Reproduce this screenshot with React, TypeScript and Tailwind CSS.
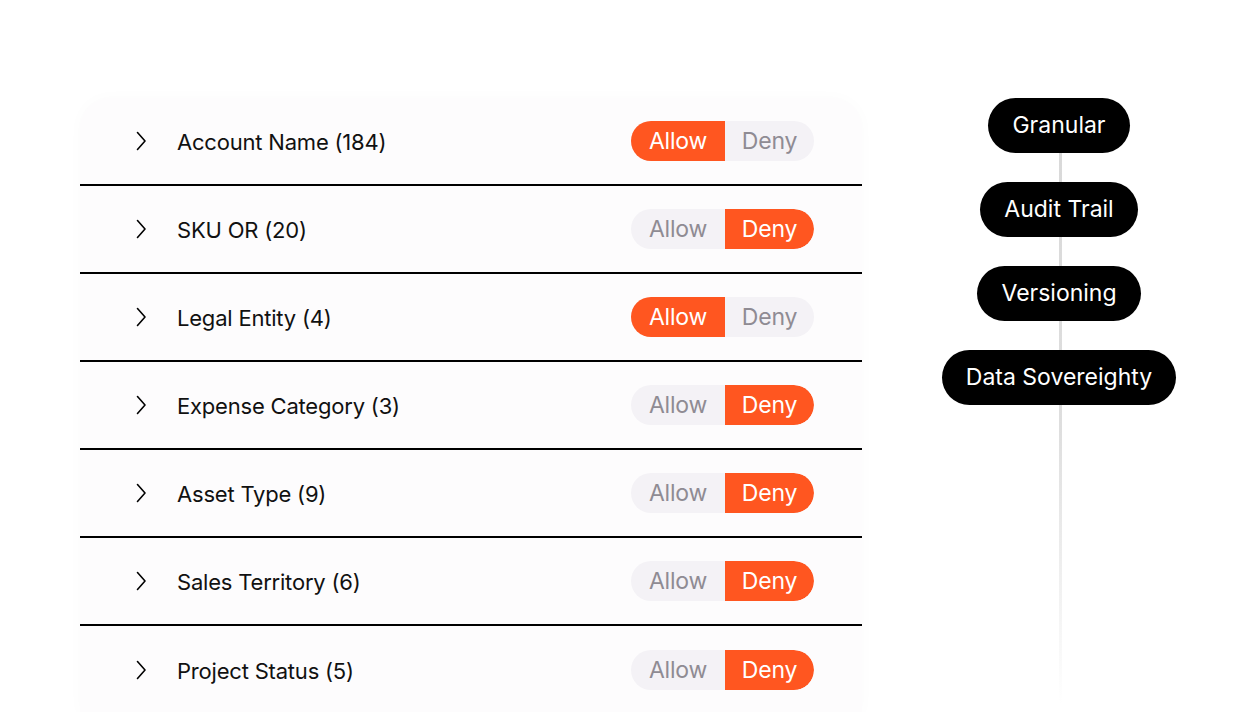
const rows = [
  { label: "Account Name (184)", allow: true },
  { label: "SKU OR (20)", allow: false },
  { label: "Legal Entity (4)", allow: true },
  { label: "Expense Category (3)", allow: false },
  { label: "Asset Type (9)", allow: false },
  { label: "Sales Territory (6)", allow: false },
  { label: "Project Status (5)", allow: false },
];

const tags = ["Granular", "Audit Trail", "Versioning", "Data Sovereighty"];

function Chevron() {
  return (
    <svg width="12" height="20" viewBox="0 0 12 20" fill="none" className="ml-[55px] shrink-0">
      <path d="M2.5 1.5 L10 10 L2.5 18.5" stroke="#000" strokeWidth="1.6" strokeLinecap="round" strokeLinejoin="round" />
    </svg>
  );
}

function Toggle({ allow }: { allow: boolean }) {
  return (
    <div className="flex h-10 rounded-full bg-[#f4f2f6] overflow-hidden text-[23px] leading-none tracking-[-0.2px]">
      <span
        className={
          allow
            ? "w-[94px] flex items-center justify-center bg-[#ff5620] text-white"
            : "w-[94px] flex items-center justify-center text-[#8f8b93]"
        }
      >
        Allow
      </span>
      <span
        className={
          allow
            ? "w-[89px] flex items-center justify-center text-[#8f8b93]"
            : "w-[89px] flex items-center justify-center bg-[#ff5620] text-white rounded-r-full"
        }
      >
        Deny
      </span>
    </div>
  );
}

export default function App() {
  return (
    <div
      className="w-[1256px] h-[712px] bg-white overflow-hidden flex"
      style={{ fontFamily: "Inter, 'Noto Sans', sans-serif" }}
    >
      {/* Permission list */}
      <div className="ml-[80px] mt-[98px] w-[782px] shrink-0 rounded-t-[30px] bg-[#fdfcfd] shadow-[0_0_16px_rgba(0,0,0,0.02)] self-start">
        {rows.map((r, i) => (
          <div
            key={r.label}
            className={
              i < rows.length - 1
                ? "h-[88px] flex items-center border-b-2 border-black"
                : "h-[88px] flex items-center"
            }
          >
            <Chevron />
            <span className="ml-[30px] mt-[2px] text-[22px] text-[#111] tracking-[-0.2px]">{r.label}</span>
            <div className="ml-auto mr-[48px]">
              <Toggle allow={r.allow} />
            </div>
          </div>
        ))}
      </div>

      {/* Feature tags */}
      <div className="relative ml-[80px] w-[234px] shrink-0 pt-[98px] flex flex-col items-center gap-[29px]">
        <div className="absolute left-[117px] top-[150px] w-[3px] h-[555px] bg-gradient-to-b from-[#d9d9d9] via-[#dedede] to-transparent" />
        {tags.map((t) => (
          <span
            key={t}
            className="relative h-[55px] px-[24px] flex items-center whitespace-nowrap rounded-full bg-black text-white text-[23px]"
          >
            {t}
          </span>
        ))}
      </div>
    </div>
  );
}
